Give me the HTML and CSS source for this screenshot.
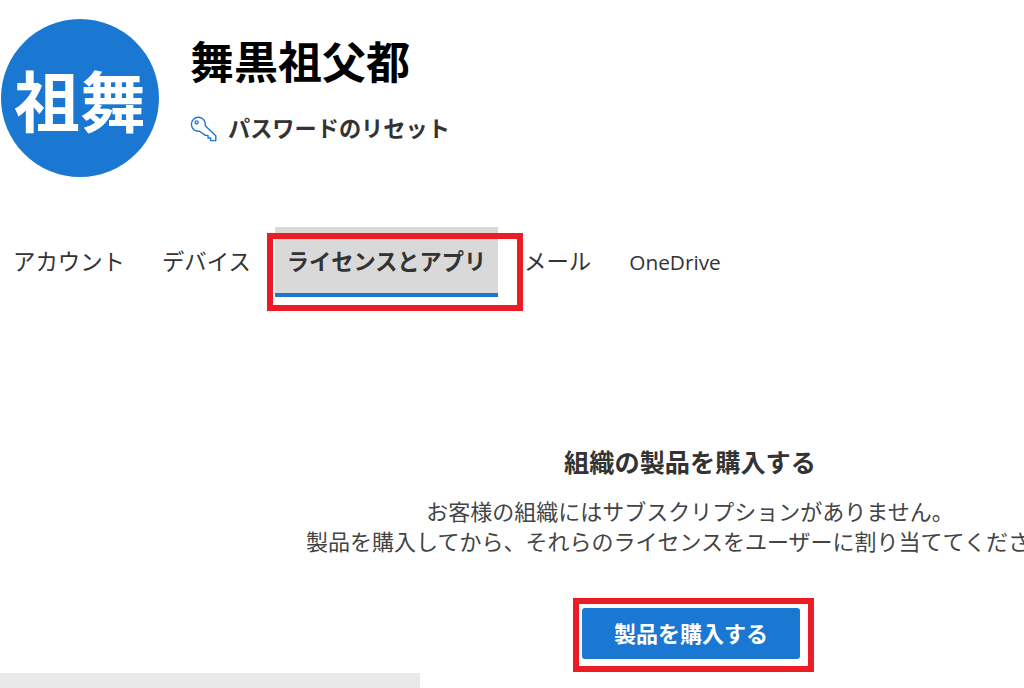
FILE: index.html
```html
<!DOCTYPE html>
<html lang="ja">
<head>
    <meta charset="UTF-8">
    <meta name="viewport" content="width=device-width, initial-scale=1.0">
    <title>舞黒祖父都</title>
    <link rel="stylesheet" href="styles.css">
</head>
<body>

<header class="user-header">
    <div class="avatar">祖舞</div>
    <div class="user-info">
        <h1>舞黒祖父都</h1>
        <a class="reset-link" href="#">
            <svg class="key-icon" viewBox="0 0 27 26" width="27" height="26" fill="none" stroke="#1b78d2" stroke-width="1.4" stroke-linejoin="round">
                <path d="M9.5 15.2A7 7 0 1 1 15.2 9.8L25.8 19.8V24.6H20.6V22H18V19.4H15.4Z"/>
                <circle cx="6.6" cy="6.4" r="1.5"/>
            </svg>
            パスワードのリセット
        </a>
    </div>
</header>

<nav class="tabs">
    <a class="tab" href="#">アカウント</a>
    <a class="tab" href="#">デバイス</a>
    <a class="tab active" href="#">ライセンスとアプリ</a>
    <a class="tab" href="#">メール</a>
    <a class="tab latin" href="#">OneDrive</a>
</nav>

<main class="empty-state">
    <h2>組織の製品を購入する</h2>
    <p>お客様の組織にはサブスクリプションがありません。<br>製品を購入してから、それらのライセンスをユーザーに割り当ててください。</p>
    <button class="buy-button">製品を購入する</button>
</main>

<div class="bottom-bar"></div>

<!-- red annotation boxes drawn over the page -->
<div class="callout callout-tab"></div>
<div class="callout callout-button"></div>

</body>
</html>
```

FILE: styles.css
```css
html, body {
    height: 688px;
    overflow: hidden;
}
body {
    position: relative;
    margin: 0;
    background-color: #fff;
    color: #333;
    font-family: "Noto Sans CJK JP", "Noto Sans", sans-serif;
}
.user-header {
    display: flex;
    gap: 31px;
    padding: 19px 0 0 1px;
}
.avatar {
    display: flex;
    align-items: center;
    justify-content: center;
    width: 158px;
    height: 158px;
    border-radius: 50%;
    background-color: #1b78d2;
    color: #fff;
    font-size: 66px;
    font-weight: bold;
    line-height: 1;
    white-space: nowrap;
}
.user-info h1 {
    margin: 17px 0 0;
    color: #000;
    font-size: 44px;
    font-weight: bold;
    line-height: 48px;
}
.reset-link {
    display: flex;
    align-items: center;
    gap: 11px;
    margin-top: 28px;
    color: #333;
    font-size: 22.2px;
    font-weight: bold;
    line-height: 28px;
    text-decoration: none;
}
.key-icon {
    margin-top: 4px;
}
.tabs {
    display: flex;
    gap: 11px;
    margin-top: 50px;
    height: 70px;
}
.tab {
    display: flex;
    align-items: center;
    box-sizing: border-box;
    padding: 0 13px;
    border-bottom: 4px solid transparent;
    color: #333;
    font-size: 22.4px;
    text-decoration: none;
    white-space: nowrap;
}
.tab.latin {
    margin-left: 1px;
    padding-top: 3px;
    font-family: "Open Sans", sans-serif;
    font-size: 20.8px;
}
.tab.active {
    margin-right: 2px;
    padding: 0 12px;
    background-color: #d9d9d9;
    border-bottom-color: #1b78d2;
    font-size: 22.2px;
    font-weight: bold;
}
.empty-state {
    width: 770px;
    margin: 147px 0 0 305px;
    text-align: center;
    white-space: nowrap;
}
.empty-state h2 {
    margin: 0;
    font-size: 25.2px;
    font-weight: bold;
    line-height: 34px;
}
.empty-state p {
    margin: 17px 0 0;
    color: #444;
    font-size: 22px;
    line-height: 30px;
}
.buy-button {
    display: block;
    width: 218px;
    height: 51px;
    margin: 53px auto 0;
    padding: 0 0 4px;
    border: none;
    border-radius: 3px;
    background-color: #1b78d2;
    color: #fff;
    font-family: inherit;
    font-size: 22px;
    font-weight: bold;
    position: relative;
    left: 1px;
}
.bottom-bar {
    width: 420px;
    height: 15px;
    margin-top: 14px;
    background-color: #e9e9e9;
}
.callout {
    position: absolute;
    box-sizing: border-box;
    border: 6px solid #ed1c24;
}
.callout-tab {
    left: 267px;
    top: 233px;
    width: 256px;
    height: 78px;
}
.callout-button {
    left: 573px;
    top: 598px;
    width: 241px;
    height: 74px;
}
```
